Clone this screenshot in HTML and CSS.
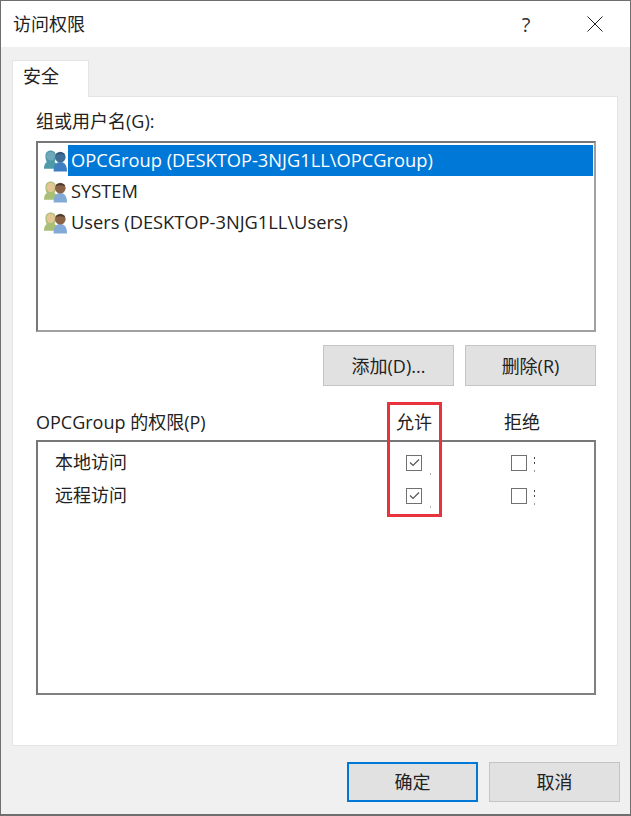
FILE: index.html
```html
<!DOCTYPE html>
<html lang="zh-CN">
<head>
    <meta charset="UTF-8">
    <meta name="viewport" content="width=device-width, initial-scale=1.0">
    <title>访问权限</title>
    <link rel="stylesheet" href="styles.css">
</head>
<body>
    <svg class="defs" width="0" height="0">
        <symbol id="users" viewBox="0 0 26 24">
            <path d="M8 1c3.500 0 5.500 2.500 5.500 6s-1.500 6-1.500 6c2 1 3 4 3 7H1c0-3 1-6 3-7 0 0-1.500-2.500-1.500-6S4.500 1 8 1z" fill="#a9bf78"/>
            <path d="M8 2.500c2.800 0 4.300 2 4.300 4.500S10.500 12 8 12 3.700 9.500 3.700 7 5.200 2.500 8 2.500z" fill="#e3c694"/>
            <path d="M18 13c4 0 7 3 7 10H11c0-7 3-10 7-10z" fill="#83a9d6"/>
            <circle cx="18" cy="8" r="5.500" fill="#8a6347"/>
            <path d="M13 6c1-4 9-4 10 0-3-1.500-7-1.500-10 0z" fill="#4a3a30"/>
        </symbol>
        <symbol id="users-sel" viewBox="0 0 26 24">
            <path d="M8 1c3.500 0 5.500 2.500 5.500 6s-1.500 6-1.500 6c2 1 3 4 3 7H1c0-3 1-6 3-7 0 0-1.500-2.500-1.500-6S4.500 1 8 1z" fill="#4f9aa8"/>
            <circle cx="8" cy="7" r="4.500" fill="#6fa8bb"/>
            <path d="M18 13c4 0 7 3 7 10H11c0-7 3-10 7-10z" fill="#3d7fc2"/>
            <circle cx="18" cy="8" r="5.500" fill="#3f6f96"/>
            <path d="M13 6c1-4 9-4 10 0-3-1.500-7-1.500-10 0z" fill="#2f5878"/>
        </symbol>
    </svg>

    <div class="window">
        <div class="titlebar">
            <span class="title">访问权限</span>
            <span class="help">?</span>
            <svg class="close" width="16" height="16" viewBox="0 0 16 16">
                <path d="M0.5 0.5L15.5 15.5M15.5 0.5L0.5 15.5" stroke="#222" fill="none"/>
            </svg>
        </div>

        <div class="content">
            <div class="tabs">
                <div class="tab">安全</div>
            </div>

            <div class="panel">
                <div class="group-label">组或用户名(G):</div>
                <div class="listbox">
                    <div class="user-row selected">
                        <svg class="user-icon"><use href="#users-sel"/></svg>
                        <span class="user-name">OPCGroup (DESKTOP-3NJG1LL\OPCGroup)</span>
                    </div>
                    <div class="user-row">
                        <svg class="user-icon"><use href="#users"/></svg>
                        <span class="user-name">SYSTEM</span>
                    </div>
                    <div class="user-row">
                        <svg class="user-icon"><use href="#users"/></svg>
                        <span class="user-name">Users (DESKTOP-3NJG1LL\Users)</span>
                    </div>
                </div>

                <div class="list-buttons">
                    <button class="btn">添加(D)...</button>
                    <button class="btn">删除(R)</button>
                </div>

                <div class="perm-head">
                    <span class="perm-label">OPCGroup 的权限(P)</span>
                    <span class="perm-col">允许</span>
                    <span class="perm-col">拒绝</span>
                </div>
                <div class="perm-list">
                    <div class="perm-row">
                        <span class="perm-name">本地访问</span>
                        <span class="perm-cell"><span class="check"><svg width="11" height="9" viewBox="0 0 11 9"><path d="M1 4.500L4 7.500L10 1.500" stroke="#555" stroke-width="1.200" fill="none"/></svg></span><span class="speck allow"></span></span>
                        <span class="perm-cell"><span class="check"></span><span class="speck deny"></span></span>
                    </div>
                    <div class="perm-row">
                        <span class="perm-name">远程访问</span>
                        <span class="perm-cell"><span class="check"><svg width="11" height="9" viewBox="0 0 11 9"><path d="M1 4.500L4 7.500L10 1.500" stroke="#555" stroke-width="1.200" fill="none"/></svg></span><span class="speck allow"></span></span>
                        <span class="perm-cell"><span class="check"></span><span class="speck deny"></span></span>
                    </div>
                </div>
                <div class="highlight"></div>
            </div>

            <div class="footer">
                <button class="btn default">确定</button>
                <button class="btn">取消</button>
            </div>
        </div>
    </div>
</body>
</html>
```

FILE: styles.css
```css
/* General Styling */
html, body {
    margin: 0;
    padding: 0;
}

body {
    width: 631px;
    height: 816px;
    overflow: hidden;
    font-family: 'Open Sans', 'Noto Sans CJK SC', sans-serif;
    font-size: 18px;
    color: #222;
    background-color: #f0f0f0;
}

.defs {
    position: absolute;
}

.window {
    box-sizing: border-box;
    width: 631px;
    height: 816px;
    border: 1px solid #6f6f6f;
    border-bottom-width: 2px;
    display: flex;
    flex-direction: column;
}

/* Title bar */
.titlebar {
    height: 46px;
    background: #ffffff;
    display: flex;
    align-items: center;
    padding-left: 12px;
    flex-shrink: 0;
}

.title {
    flex: 1;
    line-height: 44px;
}

.help {
    width: 20px;
    margin-right: 51px;
    text-align: center;
    font-size: 20px;
    color: #333;
}

.close {
    margin-right: 27px;
}

.content {
    flex: 1;
    display: flex;
    flex-direction: column;
    padding: 13px 11px 0 11px;
}

/* Tab */
.tabs {
    display: flex;
    height: 36px;
}

.tab {
    width: 77px;
    height: 37px;
    box-sizing: border-box;
    background: #ffffff;
    border: 1px solid #e4e4e4;
    border-bottom: none;
    padding-left: 10px;
    line-height: 31px;
    position: relative;
    z-index: 1;
}

.panel {
    position: relative;
    box-sizing: border-box;
    width: 606px;
    height: 650px;
    background: #ffffff;
    border: 1px solid #e4e4e4;
    padding: 0 21px 0 23px;
}

.group-label {
    height: 44px;
    line-height: 49px;
}

/* User list */
.listbox {
    box-sizing: border-box;
    width: 560px;
    height: 191px;
    border: 2px solid #8c8c8c;
    border-color: #777 #a0a0a0 #a0a0a0 #777;
    padding: 2px 1px 0 5px;
}

.user-row {
    display: flex;
    align-items: center;
    height: 31px;
}

.user-icon {
    width: 25px;
    height: 24px;
    flex-shrink: 0;
}

.user-name {
    flex: 1;
    height: 31px;
    line-height: 30px;
    padding-left: 3px;
    font-size: 18.3px;
    white-space: nowrap;
}

.selected .user-name {
    background: #0078d7;
    color: #ffffff;
}

.list-buttons {
    display: flex;
    justify-content: flex-end;
    gap: 11px;
    margin-top: 13px;
}

.btn {
    box-sizing: border-box;
    width: 131px;
    height: 41px;
    background: #e1e1e1;
    border: 1px solid #c4c4c4;
    font-family: inherit;
    font-size: 18px;
    color: #222;
    padding: 0 0 2px;
}

/* Permissions */
.perm-head {
    box-sizing: border-box;
    display: flex;
    align-items: center;
    height: 54px;
    padding-top: 18px;
    line-height: 36px;
}

.perm-label {
    width: 351px;
    flex-shrink: 0;
}

.perm-col {
    width: 54px;
    margin-right: 54px;
    text-align: center;
    flex-shrink: 0;
}

.perm-col:last-child {
    margin-right: 0;
}

.perm-list {
    box-sizing: border-box;
    width: 560px;
    height: 255px;
    border: 2px solid #777;
    border-color: #777 #808080 #808080 #777;
    padding-top: 4px;
}

.perm-row {
    display: flex;
    align-items: center;
    height: 33px;
    padding-left: 17px;
}

.perm-name {
    width: 351px;
    flex-shrink: 0;
    line-height: 27px;
}

.perm-cell {
    width: 105px;
    flex-shrink: 0;
    display: flex;
    align-items: center;
    position: relative;
}

.check {
    box-sizing: border-box;
    width: 16px;
    height: 16px;
    border: 1px solid #707070;
    display: flex;
    align-items: center;
    justify-content: center;
}

.perm-row .speck {
    position: absolute;
    width: 1px;
}

.speck.allow {
    left: 24px;
    top: 18px;
    height: 2px;
    background: #b5b5b5;
}

.speck.deny {
    left: 23px;
    top: 2px;
    height: 15px;
    background: linear-gradient(#444 0 2px, transparent 2px 5px, #444 5px 7px, transparent 7px 13px, #999 13px 15px);
}

.highlight {
    position: absolute;
    left: 374px;
    top: 305px;
    width: 55px;
    height: 115px;
    box-sizing: border-box;
    border: 3px solid #e8333c;
}

.footer {
    display: flex;
    justify-content: flex-end;
    gap: 11px;
    margin-top: 16px;
    margin-right: -1px;
}

.footer .btn {
    height: 40px;
}

.footer .btn.default {
    border: 2px solid #0078d7;
}
```
